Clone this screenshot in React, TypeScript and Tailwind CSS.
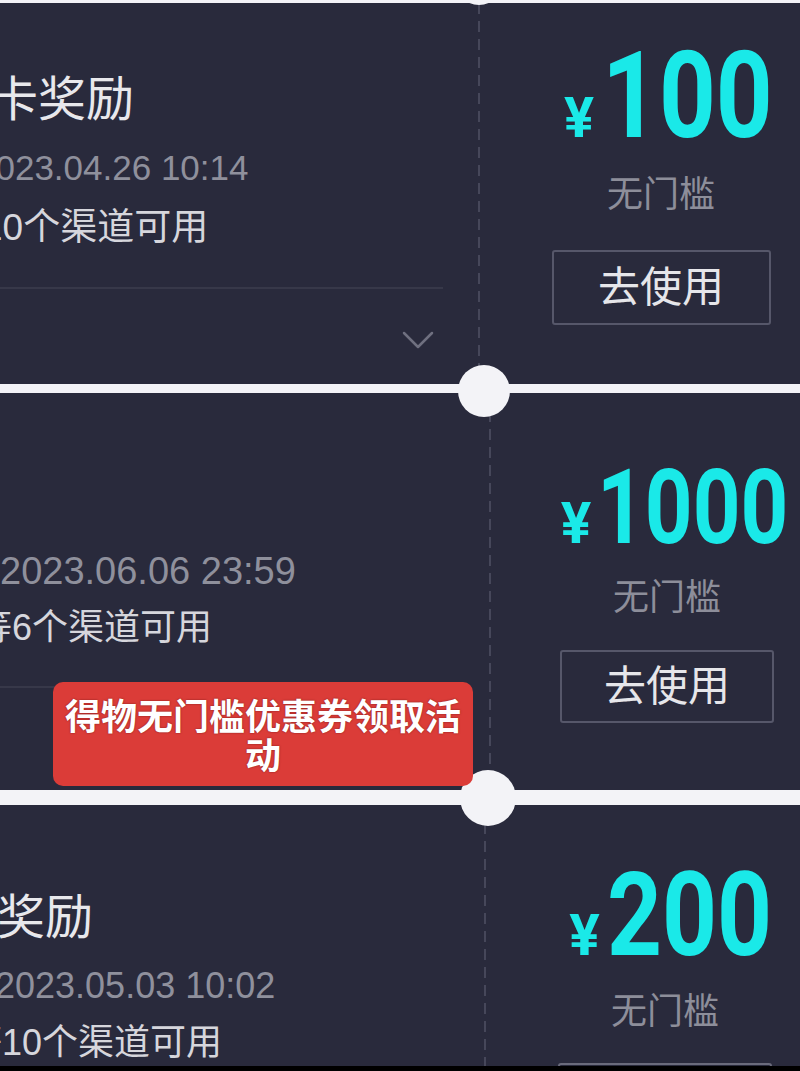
import React from "react";

function Chevron() {
  return (
    <svg width="32" height="18" viewBox="0 0 32 18" fill="none">
      <polyline points="2,2 16,16 30,2" stroke="#6f7080" strokeWidth="2.5" strokeLinecap="round" strokeLinejoin="round" />
    </svg>
  );
}

function Dashed() {
  return (
    <div className="w-[2px] shrink-0 self-stretch bg-[linear-gradient(to_bottom,#46475a_0_11px,transparent_11px_18px)] bg-[length:2px_18px] bg-repeat-y" />
  );
}

export default function App() {
  return (
    <div className="relative flex h-[1071px] w-[800px] flex-col overflow-hidden bg-[#f3f3f7] pt-[3px] font-['Liberation_Sans','Noto_Sans_CJK_SC',sans-serif]">
      {/* Card 1 */}
      <div className="flex h-[381px] w-[844px] shrink-0 flex-row bg-[#292a3c]">
        <div className="flex w-[478px] shrink-0 flex-col overflow-hidden whitespace-nowrap">
          <div className="ml-[-10px] mt-[69px] text-[48px] leading-[56px] text-[#e8e8ec]">卡奖励</div>
          <div className="ml-[-24px] mt-[20px] text-[35px] leading-[40px] text-[#8f909c]">2023.04.26 10:14</div>
          <div className="ml-[-55px] mt-[20px] text-[37px] leading-[40px] text-[#d6d6dc]">等10个渠道可用</div>
          <div className="mt-[39px] h-[2px] w-[443px] bg-[#373849]" />
          <div className="ml-[402px] mt-[42px] flex">
            <Chevron />
          </div>
        </div>
        <Dashed />
        <div className="flex w-[362px] shrink-0 flex-col items-center">
          <div className="ml-[10px] flex flex-row items-baseline pt-[33px] font-['Roboto',sans-serif] font-bold text-[#1ae9e8]">
            <span className="mr-[8px] text-[56px] leading-none">¥</span>
            <span className="inline-block w-[166px] whitespace-nowrap text-[121px] leading-[121px]">
              <span className="inline-block origin-left scale-x-[0.82]">100</span>
            </span>
          </div>
          <div className="mt-[16px] text-[36px] leading-[44px] text-[#8d8e9a]">无门槛</div>
          <div className="mt-[33px] flex h-[75px] w-[219px] items-center justify-center rounded-[3px] border-2 border-[#56576a] text-[42px] text-[#e6e6ea]">
            去使用
          </div>
        </div>
      </div>

      {/* Card 2 */}
      <div className="mt-[9px] flex h-[397px] w-[844px] shrink-0 flex-row bg-[#292a3c]">
        <div className="flex w-[489px] shrink-0 flex-col overflow-hidden whitespace-nowrap">
          <div className="mt-[156px] text-[38px] leading-[44px] text-[#8f909c]">2023.06.06 23:59</div>
          <div className="ml-[-24px] mt-[13px] text-[36px] leading-[44px] text-[#d6d6dc]">等6个渠道可用</div>
          <div className="mt-[36px] h-[2px] w-[455px] bg-[#373849]" />
        </div>
        <Dashed />
        <div className="flex w-[352px] shrink-0 flex-col items-center">
          <div className="ml-[9px] flex flex-row items-baseline pt-[63px] font-['Roboto',sans-serif] font-bold text-[#1ae9e8]">
            <span className="mr-[6px] text-[57px] leading-none">¥</span>
            <span className="inline-block w-[185px] whitespace-nowrap text-[103px] leading-[103px]">
              <span className="inline-block origin-left scale-x-[0.81]">1000</span>
            </span>
          </div>
          <div className="mt-[17px] text-[36px] leading-[44px] text-[#8d8e9a]">无门槛</div>
          <div className="mt-[30px] flex h-[73px] w-[214px] items-center justify-center rounded-[3px] border-2 border-[#56576a] text-[42px] text-[#e6e6ea]">
            去使用
          </div>
        </div>
      </div>

      {/* Card 3 */}
      <div className="mt-[15px] flex h-[261px] w-[844px] shrink-0 flex-row overflow-hidden bg-[#292a3c]">
        <div className="flex w-[484px] shrink-0 flex-col overflow-hidden whitespace-nowrap">
          <div className="ml-[-51px] mt-[85px] text-[48px] leading-[56px] text-[#e8e8ec]">卡奖励</div>
          <div className="ml-[-5px] mt-[18px] text-[36px] leading-[44px] text-[#8f909c]">2023.05.03 10:02</div>
          <div className="ml-[-34px] mt-[13px] text-[36px] leading-[44px] text-[#d6d6dc]">等10个渠道可用</div>
        </div>
        <Dashed />
        <div className="flex w-[358px] shrink-0 flex-col items-center">
          <div className="ml-[8px] flex flex-row items-baseline pt-[52px] font-['Roboto',sans-serif] font-bold text-[#1ae9e8]">
            <span className="mr-[7px] text-[57px] leading-none">¥</span>
            <span className="inline-block w-[162px] whitespace-nowrap text-[117px] leading-[117px]">
              <span className="inline-block origin-left scale-x-[0.82]">200</span>
            </span>
          </div>
          <div className="mt-[16px] text-[36px] leading-[44px] text-[#8d8e9a]">无门槛</div>
          <div className="mt-[29px] flex h-[73px] w-[214px] shrink-0 items-center justify-center rounded-[3px] border-2 border-[#6a6b7c] text-[42px] text-[#e6e6ea]">
            去使用
          </div>
        </div>
      </div>

      <div className="mt-auto h-[5px] w-full shrink-0 bg-black" />

      {/* ticket notches */}
      <div className="absolute left-[454px] top-[-45px] h-[50px] w-[50px] rounded-full bg-[#f3f3f7]" />
      <div className="absolute left-[458px] top-[365px] h-[52px] w-[52px] rounded-full bg-[#f3f3f7]" />
      <div className="absolute left-[460px] top-[770px] h-[56px] w-[56px] rounded-full bg-[#f3f3f7]" />

      {/* subtitle banner */}
      <div className="absolute left-[53px] top-[682px] h-[104px] w-[420px] rounded-[10px] bg-[#db3c38] pt-[16px] text-center text-[36px] font-bold leading-[39px] text-white [text-shadow:0_0_2px_rgba(60,0,0,0.6)]">
        得物无门槛优惠券领取活
        <br />
        动
      </div>
    </div>
  );
}
